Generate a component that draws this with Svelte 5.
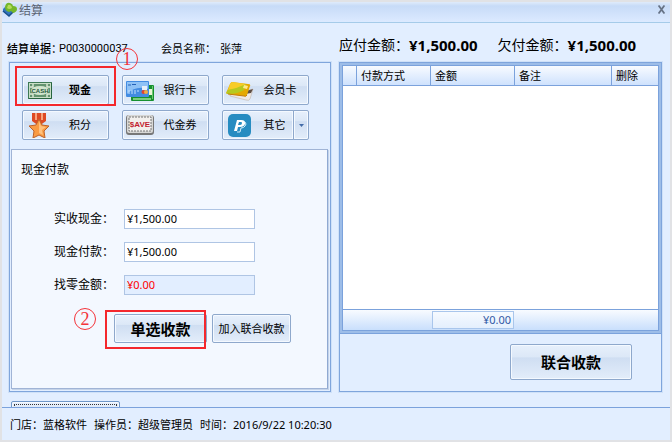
<script>
  let received = $state('¥1,500.00');
  let paid = $state('¥1,500.00');
  let change = $state('¥0.00');
  let active = $state('cash');

  const methods = [
    { key: 'cash', label: '现金' },
    { key: 'bank', label: '银行卡' },
    { key: 'member', label: '会员卡' },
    { key: 'points', label: '积分' },
    { key: 'voucher', label: '代金券' },
    { key: 'other', label: '其它', split: true }
  ];
</script>

{#snippet icon(key)}
  <svg class="icon" viewBox="0 0 30 26" aria-hidden="true">
    {#if key === 'cash'}
      <rect x="2" y="5" width="24" height="17" fill="#3d7955" />
      <rect x="3" y="6" width="22" height="15" fill="#c9dfc6" />
      <rect x="4" y="7" width="20" height="13" fill="#64936f" />
      <path d="M4 10h3V7M24 10h-3V7M4 17h3v3M24 17h-3v3" fill="none" stroke="#dfecd9" stroke-width="1.4" />
      <ellipse cx="14" cy="13.5" rx="9" ry="4.6" fill="#d2e5cd" />
      <text x="14" y="16" text-anchor="middle" font-size="6" font-weight="bold" fill="#24563a">CASH</text>
      <path d="M3 21.5h22M25.5 6v15" stroke="#28643f" stroke-width="1" />
    {:else if key === 'bank'}
      <g transform="translate(-3 0)">
        <rect x="8" y="8" width="23" height="16" rx="1" fill="#16902f" />
        <path d="M10 22h18" stroke="#9ee29d" stroke-width="1.5" />
        <rect x="25" y="12" width="4" height="6" fill="#eaf5d8" />
        <path d="M29.5 9v13" stroke="#6cca70" />
        <rect x="3" y="4" width="23" height="16" rx="1" fill="#438ce2" />
        <path d="M4 5h21v7Q13 8 4 17Z" fill="#8fc2f6" />
        <path d="M5 8h3M9 7.5h4" stroke="#2562b7" stroke-width="1.2" />
        <path d="M5 14h12M5 16h9" stroke="#c8e2ff" stroke-dasharray="2 1" />
        <rect x="19" y="9" width="5" height="4" fill="#e7eff9" />
        <circle cx="20.5" cy="15" r="2" fill="#df4432" />
        <circle cx="23" cy="15" r="2" fill="#f2ac43" />
      </g>
    {:else if key === 'member'}
      <path d="M4 18 27 12 24 22Q23 24 20 23L4 19Z" fill="#eee9e4" stroke="#bdb2a9" stroke-width=".6" />
      <path d="M20 14 27 12 25 16 19 17Z" fill="#5d4d43" />
      <path d="M6 5 22 7Q25 7 24 9L21 18Q20 20 18 19L2 17Q-1 17 1 14L4 7Q5 5 6 5Z" fill="#e5a900" />
      <path d="M6 5 20 7Q14 12 2 13L4 7Z" fill="#f7cc27" />
      <path d="M2 13Q12 11 20 7L18 13Q12 17 2 17Q-1 17 2 13Z" fill="#b6c91f" />
      <path d="m18 8 4 1-1 3-4-1Z" fill="#ffe98b" />
      <path d="M2 17 18 19Q20 20 21 18" fill="none" stroke="#c47c08" />
    {:else if key === 'points'}
      <path d="M6 1h14v8l-7 5-7-5Z" fill="#dd4a24" />
      <path d="M9 1h2v7H9ZM15 1h2v7h-2Z" fill="#f8a37c" />
      <path d="m13 7 3 6 7 1-5 5 1 7-6-3-6 3 1-7-5-5 7-1Z" fill="#f99b43" stroke="#bd622a" stroke-linejoin="round" />
      <path d="m13 9 2 5 5 1-4 3 1 5-4-2Z" fill="#ffc17e" />
    {:else if key === 'voucher'}
      <rect x="0" y="3" width="28" height="20" rx="3" fill="#777" />
      <rect x="1" y="3" width="26" height="18" rx="2" fill="#d7d7d5" />
      <rect x="3" y="5" width="22" height="14" fill="#f2f0ed" stroke="#777" stroke-dasharray="2 1" />
      <text x="14" y="15" text-anchor="middle" font-size="8" font-weight="bold" fill="#c21e31">$AVE</text>
    {:else}
      <rect x="2" y="2" width="23" height="23" rx="5" fill="#278cc1" />
      <path d="M11 8h4q5 0 4 4-1 3-5 3h-2l-1 4H8Z" fill="#fff" />
      <path d="m13 10-1 3h2q2 0 2-2 0-1-1-1Z" fill="#278cc1" />
      <path d="M19 10q2 2 0 4-1 2-4 2l-1 4h-3" fill="none" stroke="#d3edf9" stroke-width="1" />
    {/if}
  </svg>
{/snippet}

<div class="window" lang="zh-CN">
  <header class="titlebar">
    <svg class="logo" viewBox="0 0 16 16" aria-hidden="true">
      <path d="M1 7 6 2l6 6-5 6-6-5Z" fill="#3476bc" />
      <path d="m1 9 6 5 5-5" fill="none" stroke="#174e8b" stroke-width="1.5" />
      <path d="M3 5Q4 0 8 1q3 1 3 3 4 0 4 3t-4 4L9 9 7 10Q3 9 3 5Z" fill="#75b72b" />
      <path d="M6 3q3-1 4 3-3 2-5 0Z" fill="#b5dc5a" />
    </svg>
    <h1>结算</h1>
    <button class="close" aria-label="关闭">
      <svg viewBox="0 0 9 9">
        <path d="M2 1 7 8M7 1 2 8" stroke="#677386" stroke-width="1.8" />
        <path d="M1 1h2M6 1h2M1 8h2M6 8h2" stroke="#677386" />
      </svg>
    </button>
  </header>

  <main>
    <section class="column">
      <div class="info">
        <span class="order"><b>结算单据：</b><span class="number">P0030000037</span></span>
        <span>会员名称：</span>
        <span>张萍</span>
      </div>
      <div class="panel">
        <div class="methods">
          {#each methods as m (m.key)}
            <div class="method" class:split={m.split}>
              <button class="btn pay" class:active={active === m.key} onclick={() => (active = m.key)}>
                {@render icon(m.key)}
                <span>{m.label}</span>
              </button>
              {#if m.split}
                <button class="btn more" aria-label="更多"><svg viewBox="0 0 5 3"><path d="M0 0h5L2.5 3Z" fill="#426ba8" /></svg></button>
              {/if}
              {#if m.key === 'cash'}
                <i class="mark first"></i>
                <span class="step one">1</span>
              {/if}
            </div>
          {/each}
        </div>
        <div class="form">
          <h2>现金付款</h2>
          <div class="fields">
            <label for="received">实收现金：</label>
            <input id="received" bind:value={received} />
            <label for="paid">现金付款：</label>
            <input id="paid" bind:value={paid} />
            <label for="change">找零金额：</label>
            <input id="change" class="change" bind:value={change} readonly />
          </div>
          <div class="actions">
            <div class="single">
              <button class="btn big">单选收款</button>
              <i class="mark second"></i>
              <span class="step two">2</span>
            </div>
            <button class="btn join">加入联合收款</button>
          </div>
        </div>
      </div>
    </section>

    <section class="column">
      <div class="totals">
        <span>应付金额：</span><strong>¥1,500.00</strong>
        <span class="due">欠付金额：</span><strong>¥1,500.00</strong>
      </div>
      <div class="panel right">
        <div class="grid">
          <table>
            <colgroup>
              <col class="c-mark" /><col class="c-type" /><col class="c-sum" /><col /><col class="c-del" />
            </colgroup>
            <thead>
              <tr><th></th><th>付款方式</th><th>金额</th><th>备注</th><th>删除</th></tr>
            </thead>
            <tbody>
              <tr><td colspan="5"></td></tr>
            </tbody>
            <tfoot>
              <tr><td></td><td></td><td class="sum"><output>¥0.00</output></td><td></td><td></td></tr>
            </tfoot>
          </table>
        </div>
        <div class="combined">
          <button class="btn big">联合收款</button>
        </div>
      </div>
    </section>
  </main>

  <div class="tray"><button class="btn stub" aria-label="展开"></button></div>

  <footer>
    <span>门店：蓝格软件</span>
    <span>操作员：超级管理员</span>
    <span>时间：2016/9/22 10:20:30</span>
  </footer>
</div>

<style>
  :global(body) {
    margin: 0;
  }
  * {
    box-sizing: border-box;
  }
  .window {
    min-height: 100vh;
    display: flex;
    flex-direction: column;
    border: 2px solid #e1e2e5;
    background: #e2eeff;
    color: #000;
    font-family: "Noto Sans", "Noto Sans CJK SC", sans-serif;
    font-size: 11px;
    line-height: 16px;
  }
  button,
  input {
    font: inherit;
    color: inherit;
  }
  .titlebar {
    height: 21px;
    display: flex;
    align-items: center;
    gap: 1px;
    padding: 0 4px 0 0;
    background: linear-gradient(#dfebfb, #c7dbf7 20%, #dceaff);
    border-bottom: 1px solid #a5cbe9;
  }
  .logo {
    width: 16px;
    height: 16px;
    margin-bottom: 4px;
  }
  h1 {
    flex: 1;
    margin: 0 0 3px;
    font-size: 12px;
    font-weight: 400;
    color: #5b6472;
  }
  .close {
    padding: 0;
    border: none;
    background: none;
    display: flex;
    margin-bottom: 6px;
  }
  .close svg {
    width: 9px;
    height: 9px;
  }
  main {
    flex: 1;
    display: grid;
    grid-template-columns: 322fr 323fr;
    gap: 8px;
    padding: 0 8px 0 7px;
  }
  .column {
    display: flex;
    flex-direction: column;
    min-width: 0;
  }
  .info,
  .totals {
    height: 39px;
    display: flex;
    align-items: center;
    white-space: nowrap;
  }
  .info {
    padding-top: 12px;
    margin-left: -2px;
    gap: 4px;
  }
  .order {
    display: flex;
    width: 150px;
  }
  .order b {
    width: 52px;
    font-weight: 500;
  }
  .number {
    font-family: Roboto, sans-serif;
  }
  .totals {
    padding-top: 4px;
    font-size: 14px;
  }
  .totals strong {
    font-size: 15px;
  }
  .due {
    margin-left: 20px;
  }
  .panel {
    flex: 1;
    display: flex;
    flex-direction: column;
    padding: 0 2px 2px 1px;
    border: 1px solid #7fa5dc;
    box-shadow: 0 0 0 1px #cfe1f8;
  }
  .methods {
    display: grid;
    grid-template-columns: repeat(3, 87px);
    gap: 5px 13px;
    padding: 12px 10px 9px 11px;
  }
  .method {
    position: relative;
    display: flex;
    height: 30px;
  }
  .btn {
    padding: 0;
    border: 1px solid #8ea8cc;
    border-radius: 2px;
    background: linear-gradient(#e7f0fc, #dce8f7 35%, #cfdef2 38%, #e3edfa);
    box-shadow: inset 0 0 0 1px #f4f9ff;
    white-space: nowrap;
  }
  .pay {
    flex: 1;
    display: flex;
    align-items: center;
  }
  .pay span {
    flex: 1;
    padding-right: 4px;
    text-align: center;
  }
  .pay.active {
    font-weight: 700;
  }
  .icon {
    width: 30px;
    height: 26px;
    margin-left: 3px;
    font-family: "Liberation Sans", sans-serif;
  }
  .split .pay {
    border-radius: 2px 0 0 2px;
  }
  .split .pay span {
    padding-right: 0;
  }
  .more {
    width: 16px;
    margin-left: -1px;
    border-radius: 0 2px 2px 0;
  }
  .more svg {
    display: block;
    width: 5px;
    height: 3px;
    margin: 0 auto;
  }
  .form {
    flex: 1;
    padding: 12px 9px;
    background: #f3f8ff;
    border: 1px solid #a0b4d6;
    border-right-color: #8fa9d2;
    box-shadow: 1px 1px 0 #c5d4e9;
    font-size: 12px;
  }
  h2 {
    margin: 0;
    font-size: 12px;
    font-weight: 400;
  }
  .fields {
    display: grid;
    grid-template-columns: 70px 131px;
    gap: 13px 0;
    margin: 31px 0 0 33px;
    align-items: center;
  }
  .fields input {
    width: 131px;
    height: 20px;
    padding: 0 2px 2px;
    border: 1px solid #afc5e4;
    background: #fff;
    font-size: 11px;
  }
  .fields .change {
    background: #e2eeff;
    color: #f00;
  }
  .actions {
    display: flex;
    gap: 5px;
    margin: 19px 0 0 93px;
  }
  .single {
    position: relative;
    display: flex;
  }
  .single .btn {
    width: 93px;
  }
  .actions .btn {
    height: 29px;
  }
  .btn.big {
    font-size: 15px;
    font-weight: 700;
  }
  .join {
    width: 79px;
    font-size: 11px;
  }
  .mark {
    position: absolute;
    border: 2px solid #f4282d;
    pointer-events: none;
  }
  .first {
    inset: -9px -7px -1px;
  }
  .second {
    inset: -4px 1px -6px -9px;
  }
  .step {
    position: absolute;
    width: 22px;
    height: 22px;
    border: 1px solid #f4343a;
    border-radius: 50%;
    color: #f4343a;
    font-family: "Liberation Serif", serif;
    font-size: 18px;
    line-height: 20px;
    text-align: center;
  }
  .one {
    left: 94px;
    top: -27px;
  }
  .two {
    left: -40px;
    top: -6px;
  }
  .right {
    padding: 0;
  }
  .grid {
    flex: 1;
    display: grid;
    padding: 1px;
    border: 1px solid #9dbde8;
    background: #9dbde8;
  }
  table {
    width: 100%;
    table-layout: fixed;
    border-collapse: separate;
    border-spacing: 0;
    border: 1px solid #7ba2dc;
    background: #fff;
  }
  .c-mark {
    width: 14px;
  }
  .c-type {
    width: 74px;
  }
  .c-sum {
    width: 84px;
  }
  .c-del {
    width: 46px;
  }
  th {
    height: 20px;
    padding: 0 4px;
    border-right: 1px solid #7ba2dc;
    border-bottom: 1px solid #7ba2dc;
    background: linear-gradient(#f8fbff, #cfe2fd);
    font-weight: 400;
    text-align: left;
  }
  th:last-child {
    border-right: none;
  }
  tbody td {
    padding: 0;
  }
  tfoot td {
    height: 21px;
    padding: 0;
    border-top: 1px solid #7ba2dc;
    background: linear-gradient(#f8fbff, #c9dffc);
  }
  tfoot .sum {
    padding: 1px;
  }
  output {
    display: block;
    height: 18px;
    padding-right: 2px;
    border: 1px solid #a9c6ec;
    background: linear-gradient(#f6faff, #e4effd);
    color: #3159a5;
    text-align: right;
  }
  .combined {
    display: flex;
    justify-content: flex-end;
    padding: 10px 29px 11px;
    border-top: 1px solid #7ba2dc;
  }
  .combined .btn {
    width: 122px;
    height: 36px;
  }
  .tray {
    height: 15px;
    padding: 9px 9px 0;
    overflow: hidden;
  }
  .stub {
    display: block;
    width: 109px;
    height: 24px;
    border-color: #6f97c8;
    outline: 1px dotted #333;
    outline-offset: -4px;
  }
  footer {
    display: flex;
    gap: 7px;
    height: 33px;
    align-items: center;
    padding: 2px 8px 0;
    border-top: 1px solid #7ba2dc;
    white-space: nowrap;
  }
</style>
